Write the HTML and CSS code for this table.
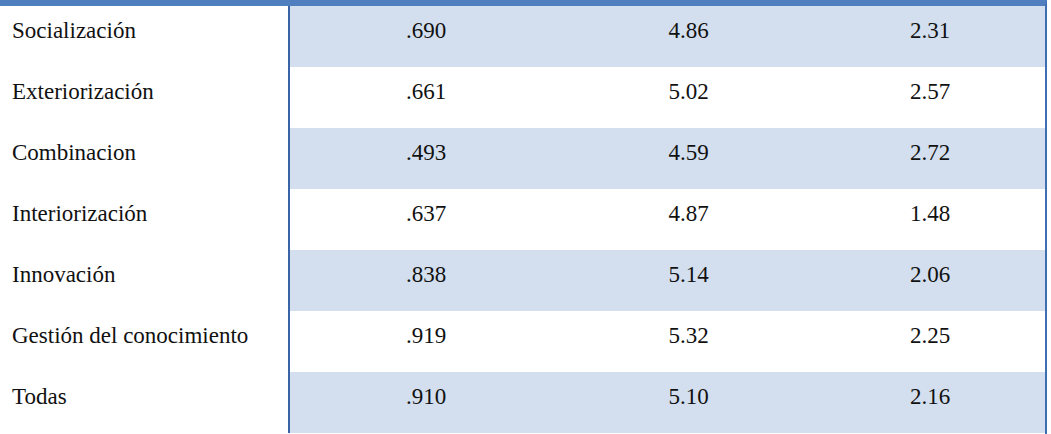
FILE: index.html
```html
<!DOCTYPE html>
<html lang="es">
<head>
<meta charset="utf-8">
<title>Tabla</title>
<link rel="stylesheet" href="styles.css">
</head>
<body>
<div class="wrap">
  <table class="data">
    <colgroup>
      <col class="c1"><col class="c2"><col class="c3"><col class="c4">
    </colgroup>
    <tbody>
      <tr class="shade"><th>Socialización</th><td>.690</td><td>4.86</td><td>2.31</td></tr>
      <tr><th>Exteriorización</th><td>.661</td><td>5.02</td><td>2.57</td></tr>
      <tr class="shade"><th>Combinacion</th><td>.493</td><td>4.59</td><td>2.72</td></tr>
      <tr><th>Interiorización</th><td>.637</td><td>4.87</td><td>1.48</td></tr>
      <tr class="shade"><th>Innovación</th><td>.838</td><td>5.14</td><td>2.06</td></tr>
      <tr><th>Gestión del conocimiento</th><td>.919</td><td>5.32</td><td>2.25</td></tr>
      <tr class="shade"><th>Todas</th><td>.910</td><td>5.10</td><td>2.16</td></tr>
    </tbody>
  </table>
</div>
</body>
</html>
```
FILE: styles.css
```css
html, body {
  margin: 0;
  padding: 0;
  background: #ffffff;
}
.wrap {
  width: 1047px;
  border-top: 6px solid #4f7fbf;
  border-right: 2px solid #3f6fb3;
  box-sizing: border-box;
  height: 434px;
  overflow: hidden;
}
.data {
  border-collapse: collapse;
  table-layout: fixed;
  width: 1045px;
  font-family: "Liberation Serif", "Times New Roman", serif;
  font-size: 23px;
  line-height: 26px;
  color: #111111;
}
.c1 { width: 289px; }
.c2 { width: 273px; }
.c3 { width: 253px; }
.c4 { width: 230px; }
.data tr {
  height: 61px;
}
.data th, .data td {
  padding: 12px 0 23px 0;
  vertical-align: top;
  font-weight: normal;
  white-space: nowrap;
}
.data th {
  text-align: left;
  padding-left: 12px;
  border-right: 2px solid #3a64a8;
  background: #ffffff;
}
.data td {
  text-align: center;
}
.data tr.shade td {
  background: #d3dfee;
}
```
